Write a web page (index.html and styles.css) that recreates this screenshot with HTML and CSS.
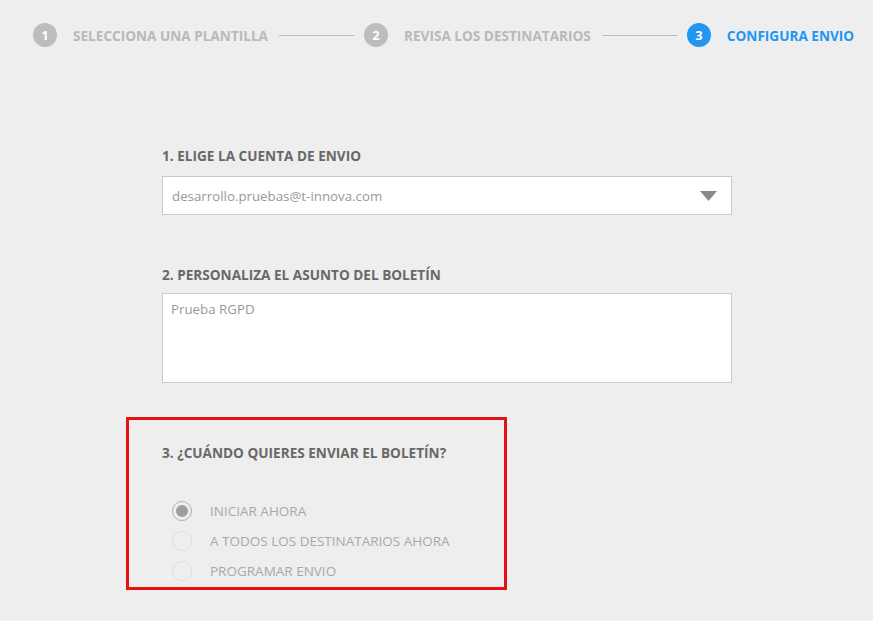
FILE: index.html
```html
<!DOCTYPE html>
<html lang="es">
<head>
<meta charset="utf-8">
<title>Configura envio</title>
<link rel="stylesheet" href="styles.css">
</head>
<body>
<div class="page">
  <nav class="steps">
    <div class="step done"><span class="num">1</span><span class="label">SELECCIONA UNA PLANTILLA</span></div>
    <span class="sep"></span>
    <div class="step done"><span class="num">2</span><span class="label">REVISA LOS DESTINATARIOS</span></div>
    <span class="sep"></span>
    <div class="step active"><span class="num">3</span><span class="label">CONFIGURA ENVIO</span></div>
  </nav>

  <main class="form">
    <section class="field f1">
      <h2 class="heading">1. ELIGE LA CUENTA DE ENVIO</h2>
      <div class="select">
        <span class="value">desarrollo.pruebas@t-innova.com</span>
        <svg class="caret" width="17" height="10" viewBox="0 0 17 10"><path d="M0 0 H17 L8.5 10 Z" fill="#8a8a8a"/></svg>
      </div>
    </section>

    <section class="field f2">
      <h2 class="heading">2. PERSONALIZA EL ASUNTO DEL BOLETÍN</h2>
      <div class="textarea">Prueba RGPD</div>
    </section>

    <section class="when">
      <h2 class="heading">3. ¿CUÁNDO QUIERES ENVIAR EL BOLETÍN?</h2>
      <ul class="radios">
        <li><span class="radio checked"></span><span>INICIAR AHORA</span></li>
        <li><span class="radio"></span><span>A TODOS LOS DESTINATARIOS AHORA</span></li>
        <li><span class="radio"></span><span>PROGRAMAR ENVIO</span></li>
      </ul>
    </section>
  </main>
</div>
</body>
</html>
```

FILE: styles.css
```css
html, body {
  margin: 0;
  padding: 0;
  background: #eeeeee;
}
body {
  font-family: "Open Sans", "Noto Sans", sans-serif;
  width: 873px;
  height: 621px;
  overflow: hidden;
}
.page {
  padding: 23px 0 0 33px;
}
.steps {
  display: flex;
  align-items: center;
  height: 24px;
}
.step {
  display: flex;
  align-items: center;
  gap: 16px;
}
.num {
  width: 24px;
  height: 24px;
  border-radius: 50%;
  background: #bdbdbd;
  color: #fff;
  font-weight: 700;
  font-size: 13px;
  display: flex;
  align-items: center;
  justify-content: center;
}
.label {
  font-size: 13.6px;
  font-weight: 700;
  color: #b9b9b9;
}
.step.active .num {
  background: #2196f3;
}
.step.active .label {
  color: #2196f3;
}
.sep {
  width: 75px;
  height: 1px;
  background: #bbb;
  margin: 0 10px 0 11px;
}
.form {
  padding: 101px 0 0 129px;
  display: flex;
  flex-direction: column;
}
.heading {
  margin: 0;
  font-size: 13.6px;
  font-weight: 700;
  color: #686868;
  line-height: 16px;
}
.field {
  width: 570px;
}
.select {
  margin-top: 12px;
  height: 37px;
  border: 1px solid #cacaca;
  background: #fff;
  display: flex;
  align-items: center;
  justify-content: space-between;
  padding: 0 14px 0 9px;
}
.value, .textarea {
  font-size: 13.3px;
  color: #999;
}
.caret {
  display: block;
}
.f2 {
  margin-top: 52px;
}
.textarea {
  margin-top: 10px;
  border: 1px solid #cacaca;
  background: #fff;
  padding: 6px 8px;
  box-sizing: border-box;
  height: 90px;
}
.when {
  margin: 34px 0 0 -36px;
  width: 381px;
  height: 173px;
  border: 3px solid #e31313;
  padding: 25px 0 0 33px;
  box-sizing: border-box;
}
.radios {
  list-style: none;
  margin: 40px 0 0 0;
  padding: 0 0 0 10px;
  display: flex;
  flex-direction: column;
  gap: 10px;
}
.radios li {
  display: flex;
  align-items: center;
  gap: 18px;
  height: 20px;
  font-size: 13.5px;
  color: #a8a8a8;
}
.radio {
  width: 18px;
  height: 18px;
  border-radius: 50%;
  border: 1px solid #dedede;
  box-sizing: content-box;
  position: relative;
}
.radio.checked {
  border-color: #b0b0b0;
}
.radio.checked::after {
  content: "";
  position: absolute;
  left: 3px;
  top: 3px;
  width: 12px;
  height: 12px;
  border-radius: 50%;
  background: #9e9e9e;
}
```
